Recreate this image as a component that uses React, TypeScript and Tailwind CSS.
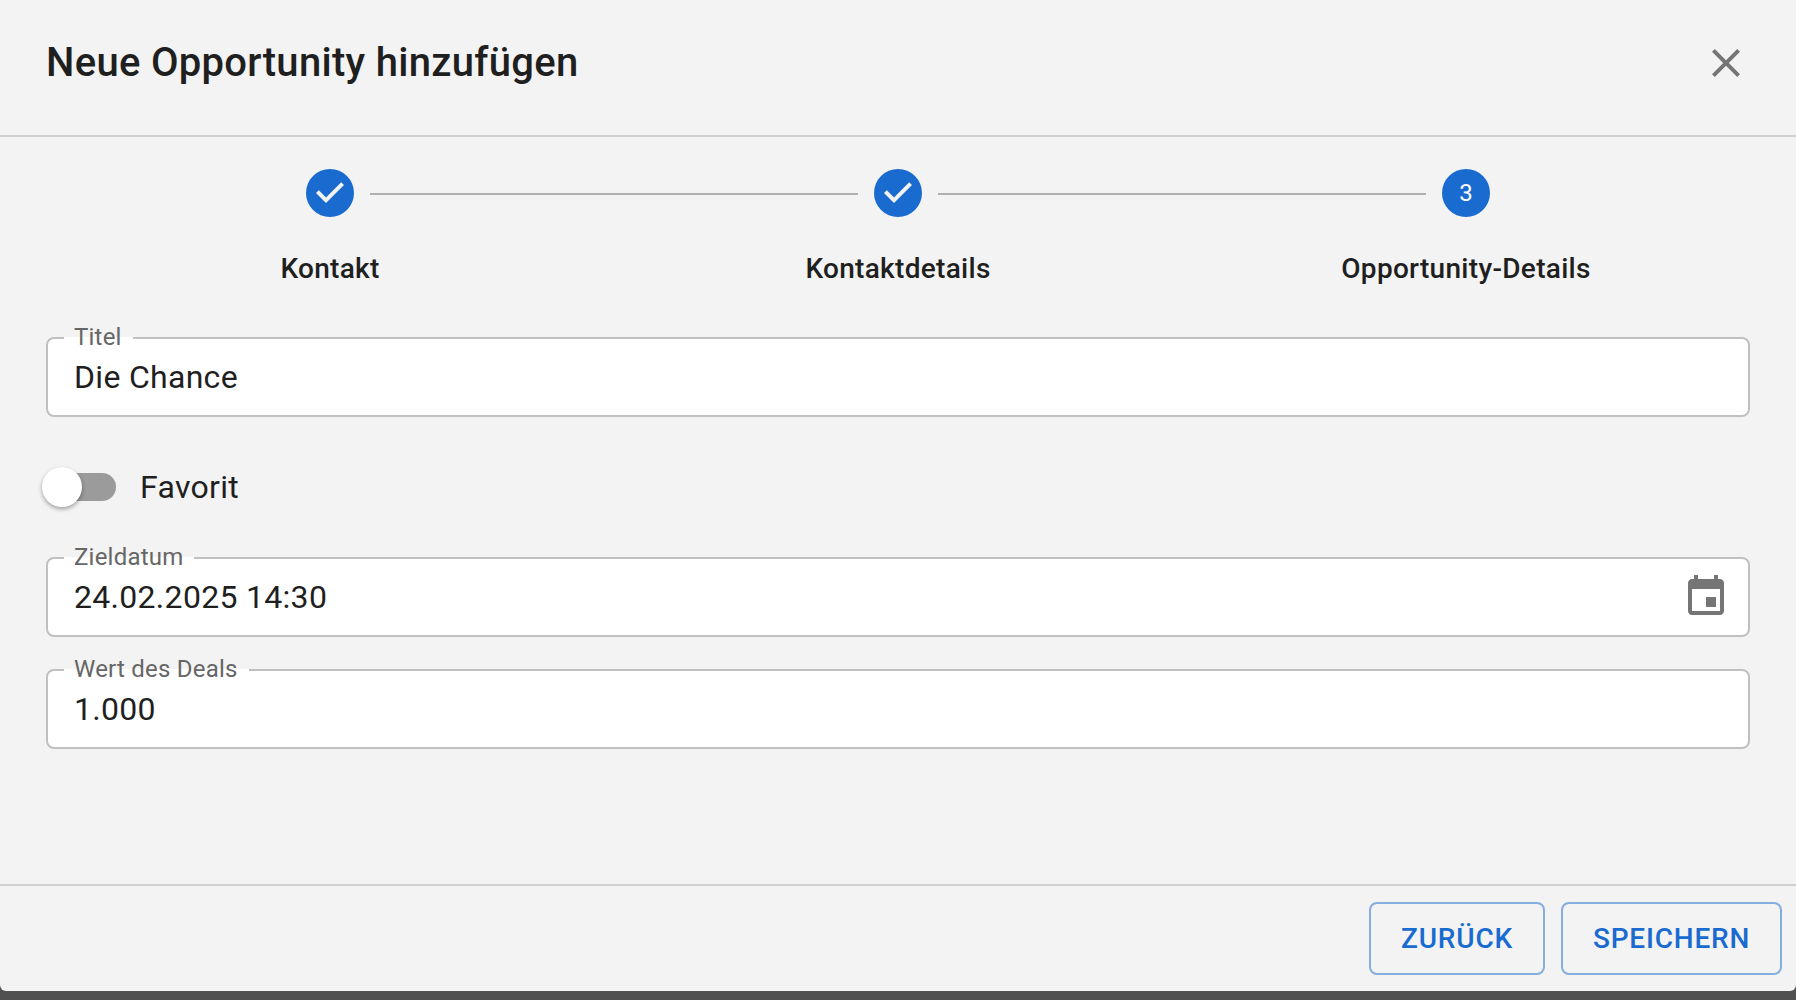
import { ReactNode } from 'react';

function StepCircle({ number }: { number?: number }) {
    if (number) {
        return (
            <div className="w-[48px] h-[48px] shrink-0 rounded-full bg-[#196bd0] text-white text-[24px] leading-[48px] text-center">
                {number}
            </div>
        );
    }
    return (
        <svg className="w-[48px] h-[48px] shrink-0" viewBox="0 0 24 24" fill="#196bd0">
            <path d="M12 0a12 12 0 1 0 0 24 12 12 0 0 0 0-24zm-2 17l-5-5 1.4-1.4 3.6 3.6 7.6-7.6L19 8l-9 9z" />
        </svg>
    );
}

function Step({ label, number, first, last }: { label: string; number?: number; first?: boolean; last?: boolean }) {
    return (
        <div className="flex flex-col items-center">
            <div className="flex items-center w-full">
                <div className={`flex-1 h-[2px] mt-[2px] mr-[16px] ${first ? '' : 'bg-[#b0b0b0]'}`} />
                <StepCircle number={number} />
                <div className={`flex-1 h-[2px] mt-[2px] ml-[16px] ${last ? '' : 'bg-[#b0b0b0]'}`} />
            </div>
            <div className="mt-[32px] text-[28px] leading-[40px] font-medium tracking-[0.3px] text-[#1f1f1f]">
                {label}
            </div>
        </div>
    );
}

function Field({ label, value, icon }: { label: string; value: string; icon?: ReactNode }) {
    return (
        <div className="relative h-[80px] flex items-center justify-between pl-[26px] pr-[18px] bg-white border-2 border-[#c0c0c0] rounded-[8px]">
            <span className="absolute top-[-16px] left-[16px] pl-[10px] pr-[11px] h-[28px] leading-[28px] text-[24px] tracking-[0.22px] text-[#666666] bg-[linear-gradient(transparent_14px,white_14px)]">
                {label}
            </span>
            <span className="text-[32px] tracking-[0.3px] text-[#1f1f1f]">{value}</span>
            {icon}
        </div>
    );
}

export default function App() {
    return (
        <div className="h-[1000px] bg-[#505050] font-['Roboto',sans-serif]">
            <div className="h-[991px] flex flex-col bg-[#f3f3f3] rounded-b-[6px]">
                <header className="h-[137px] shrink-0 flex items-center justify-between pb-[9px] pl-[46px] pr-[46px] border-b-2 border-[#d0d0d0]">
                    <h2 className="text-[40px] leading-[64px] font-medium tracking-[0.3px] text-[#1f1f1f]">
                        Neue Opportunity hinzufügen
                    </h2>
                    <svg className="w-[48px] h-[48px]" viewBox="0 0 24 24" fill="#757575">
                        <path d="M19 6.41L17.59 5 12 10.59 6.41 5 5 6.41 10.59 12 5 17.59 6.41 19 12 13.41 17.59 19 19 17.59 13.41 12 19 6.41z" />
                    </svg>
                </header>

                <main className="flex-1 px-[46px] pt-[32px]">
                    <div className="grid grid-cols-3">
                        <Step label="Kontakt" first />
                        <Step label="Kontaktdetails" />
                        <Step label="Opportunity-Details" number={3} last />
                    </div>

                    <div className="mt-[48px]">
                        <Field label="Titel" value="Die Chance" />
                    </div>

                    <div className="h-[140px] flex items-center pl-[2px] gap-[24px]">
                        <div className="relative w-[68px] h-[28px] rounded-full bg-[#9b9b9b]">
                            <div className="absolute left-[-6px] top-[-6px] w-[40px] h-[40px] rounded-full bg-white shadow-[0_2px_4px_rgba(0,0,0,0.35)]" />
                        </div>
                        <span className="text-[32px] tracking-[0.3px] text-[#1f1f1f]">Favorit</span>
                    </div>

                    <div className="flex flex-col gap-[32px]">
                        <Field
                            label="Zieldatum"
                            value="24.02.2025 14:30"
                            icon={
                                <svg className="w-[48px] h-[48px]" viewBox="0 0 24 24" fill="#757575">
                                    <path d="M17 12h-5v5h5v-5zM16 1v2H8V1H6v2H5c-1.11 0-1.99.9-1.99 2L3 19c0 1.1.89 2 2 2h14c1.1 0 2-.9 2-2V5c0-1.1-.9-2-2-2h-1V1h-2zm3 18H5V8h14v11z" />
                                </svg>
                            }
                        />
                        <Field label="Wert des Deals" value="1.000" />
                    </div>
                </main>

                <footer className="shrink-0 flex justify-end gap-[16px] pt-[16px] pb-[16px] pr-[14px] border-t-2 border-[#d0d0d0]">
                    <button className="h-[73px] w-[176px] rounded-[8px] border-2 border-[#84aee0] text-[28px] font-medium tracking-[0.8px] text-[#196bd0]">
                        ZURÜCK
                    </button>
                    <button className="h-[73px] w-[221px] rounded-[8px] border-2 border-[#84aee0] text-[28px] font-medium tracking-[0.8px] text-[#196bd0]">
                        SPEICHERN
                    </button>
                </footer>
            </div>
        </div>
    );
}
